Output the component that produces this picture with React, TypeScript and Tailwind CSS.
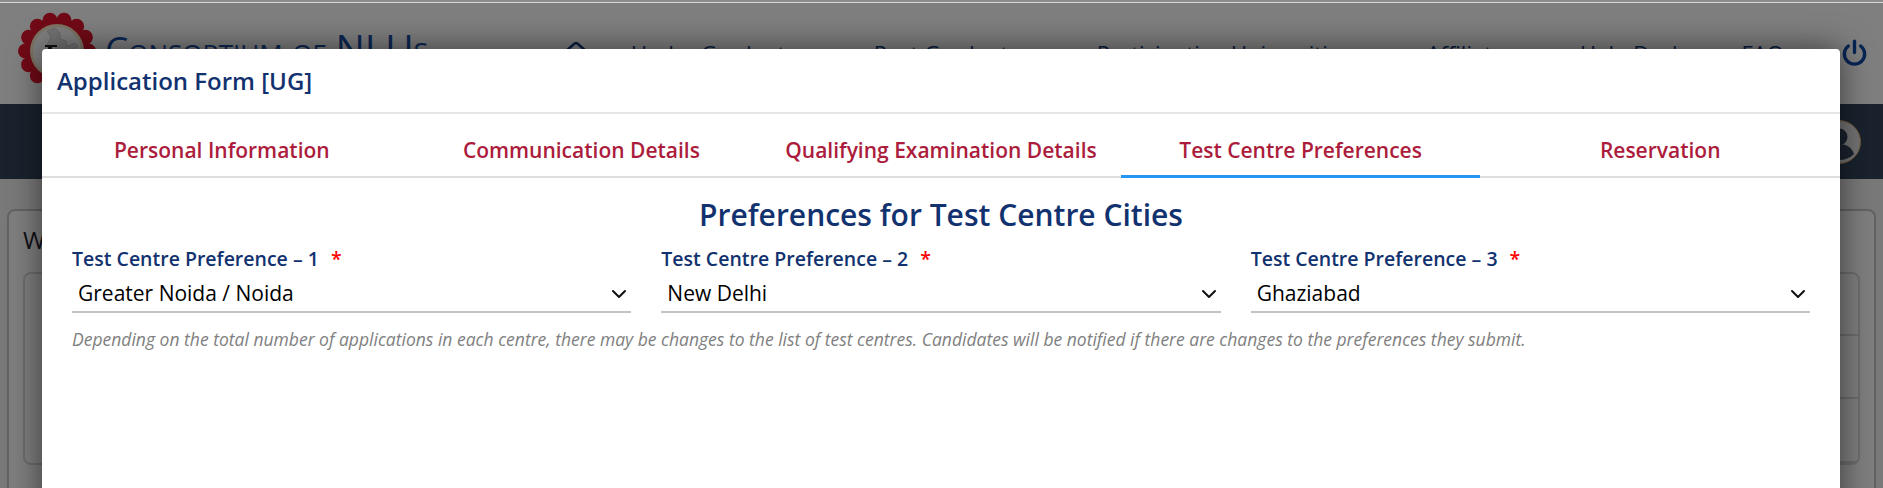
import React from "react";
import { Home } from "lucide-react";

const navy = "text-[#12326f]";

function Logo() {
  const petals = Array.from({ length: 14 }, (_, i) => (i * Math.PI * 2) / 14);
  return (
    <svg width="78" height="78" viewBox="0 0 78 78" className="shrink-0">
      {petals.map((a, i) => (
        <circle key={i} cx={39 + 31.5 * Math.cos(a)} cy={39 + 31.5 * Math.sin(a)} r="7.5" fill="#e2142d" />
      ))}
      <circle cx="39" cy="39" r="31" fill="#e2142d" />
      <circle cx="39" cy="39" r="27" fill="#fbe9c8" />
      <circle cx="39" cy="39" r="24" fill="#ffffff" />
      <path d="M29 19l8-3 5 5 0 6 6 2 1 5 8-3 3 3-6 6-5 2-5 10-3 7-5-9-4-9-5-4 3-6 3-6z" fill="#e4e4e4" stroke="#b5b5b5" strokeWidth="0.6" />
      <path d="M27 33h12v2h-5v5h-4v-5h-3z" fill="#222" />
    </svg>
  );
}

function Field({ n, value }: { n: number; value: string }) {
  return (
    <div className="min-w-0">
      <div className={`h-[33px] text-[19.5px] leading-[30px] font-semibold ${navy}`}>
        Test Centre Preference – {n}
        <span className="ml-3 text-[#ff0000]">*</span>
      </div>
      <div className="flex h-[36px] items-center justify-between border-b-2 border-[#c4c4c4] pl-[6px] pr-[4px] text-[21px] text-black">
        <span>{value}</span>
        <svg width="16" height="16" viewBox="0 0 16 16" fill="none" stroke="#111" strokeWidth="2" strokeLinecap="round" strokeLinejoin="round">
          <path d="m2 5 6 6 6-6" />
        </svg>
      </div>
    </div>
  );
}

export default function App() {
  const tabs = ["Personal Information", "Communication Details", "Qualifying Examination Details", "Test Centre Preferences", "Reservation"];
  return (
    <div className="relative h-[488px] w-[1883px] overflow-hidden bg-[#f3f3f3] font-['Open_Sans',sans-serif]">
      <div className="flex h-[104px] items-start bg-white pl-[18px] pt-[12px]">
        <Logo />
        <div className="ml-[9px] mt-[11px] w-[318px] text-[37px] leading-[50px] whitespace-nowrap text-[#1a4fa8] [font-variant:small-caps]">
          Consortium of <span className="text-[39px]">NLUs</span>
        </div>
        <div className="ml-[141px] mt-[25px] flex items-center gap-[76px] text-[22px] leading-[32px] font-medium whitespace-nowrap text-[#123a80]">
          <Home size={24} strokeWidth={2.5} className="-mr-[33px]" />
          <span>Under Graduate</span>
          <span>Post Graduate</span>
          <span>Participating Universities</span>
          <span>Affiliates</span>
          <span className="-ml-[11px]">Help Desk</span>
          <span className="-ml-[18px]">FAQ</span>
        </div>
      </div>
      <div className="flex h-[75px] items-center justify-end bg-[#33455a] pr-[22px]">
        <svg width="44" height="44" viewBox="0 0 44 44">
          <circle cx="22" cy="22" r="21.5" fill="#e6e6e6" stroke="#e0b070" />
          <circle cx="22" cy="17" r="8.5" fill="#33455a" />
          <path d="M7 34c3-8 9-10 15-10s12 2 15 10c-4 4-9 6-15 6S11 38 7 34z" fill="#33455a" />
        </svg>
      </div>
      <div className="mx-[7px] mt-[30px] h-[300px] rounded-lg border-2 border-[#c4c4c4] bg-[#fdfdfd] px-[14px] pt-[11px]">
        <div className="text-[24px] leading-[36px] text-[#223]">Welcome</div>
        <div className="mt-[14px] rounded-lg border-2 border-[#d8d8d8]">
          <div className="ml-[20px] h-[62px] border-b-2 border-[#d8d8d8]" />
          <div className="ml-[20px] h-[63px] border-b-2 border-[#d8d8d8]" />
          <div className="ml-[20px] h-[64px] border-b-2 border-[#d8d8d8]" />
        </div>
      </div>

      <svg width="27" height="27" viewBox="0 0 24 24" fill="none" stroke="#0f4aa8" strokeWidth="3" strokeLinecap="round" className="absolute left-[1841px] top-[39px]">
        <path d="M12 2v10" />
        <path d="M17.5 6.2a9 9 0 1 1-11 0" />
      </svg>

      <div className="absolute inset-0 bg-black/50 pl-[42px] pr-[43px] pt-[49px]">
        <div className="h-[500px] rounded-[4px] bg-white shadow-[0_0_32px_rgba(0,0,0,0.55)]">
          <div className={`flex h-[65px] items-center border-b-2 border-[#e6e6e6] px-[15px] text-[24px] font-[550] ${navy}`}>
            Application Form [UG]
          </div>
          <div className="grid h-[64px] grid-cols-5 border-b-2 border-[#dedede]">
            {tabs.map((t, i) => (
              <div
                key={t}
                className={`-mb-[2px] flex items-center justify-center border-b-[3px] pt-[12px] text-[21px] font-[550] text-[#ac1c3c] ${i === 3 ? "border-[#2196f3]" : "border-transparent"}`}
              >
                {t}
              </div>
            ))}
          </div>
          <div className="px-[30px]">
            <h2 className={`mt-[17px] text-center text-[30px] leading-[40px] font-semibold ${navy}`}>
              Preferences for Test Centre Cities
            </h2>
            <div className="mt-[9px] grid grid-cols-3 gap-[30px]">
              <Field n={1} value="Greater Noida / Noida" />
              <Field n={2} value="New Delhi" />
              <Field n={3} value="Ghaziabad" />
            </div>
            <p className="mt-[13px] text-[17.5px] leading-[26px] text-[#808080] italic">
              Depending on the total number of applications in each centre, there may be changes to the list of test centres. Candidates will be notified if there are changes to the preferences they submit.
            </p>
          </div>
        </div>
      </div>
      <div className="absolute inset-x-0 top-0 h-[3px] border-b border-[#d8d8d8] bg-[#8c8c8c]" />
    </div>
  );
}
